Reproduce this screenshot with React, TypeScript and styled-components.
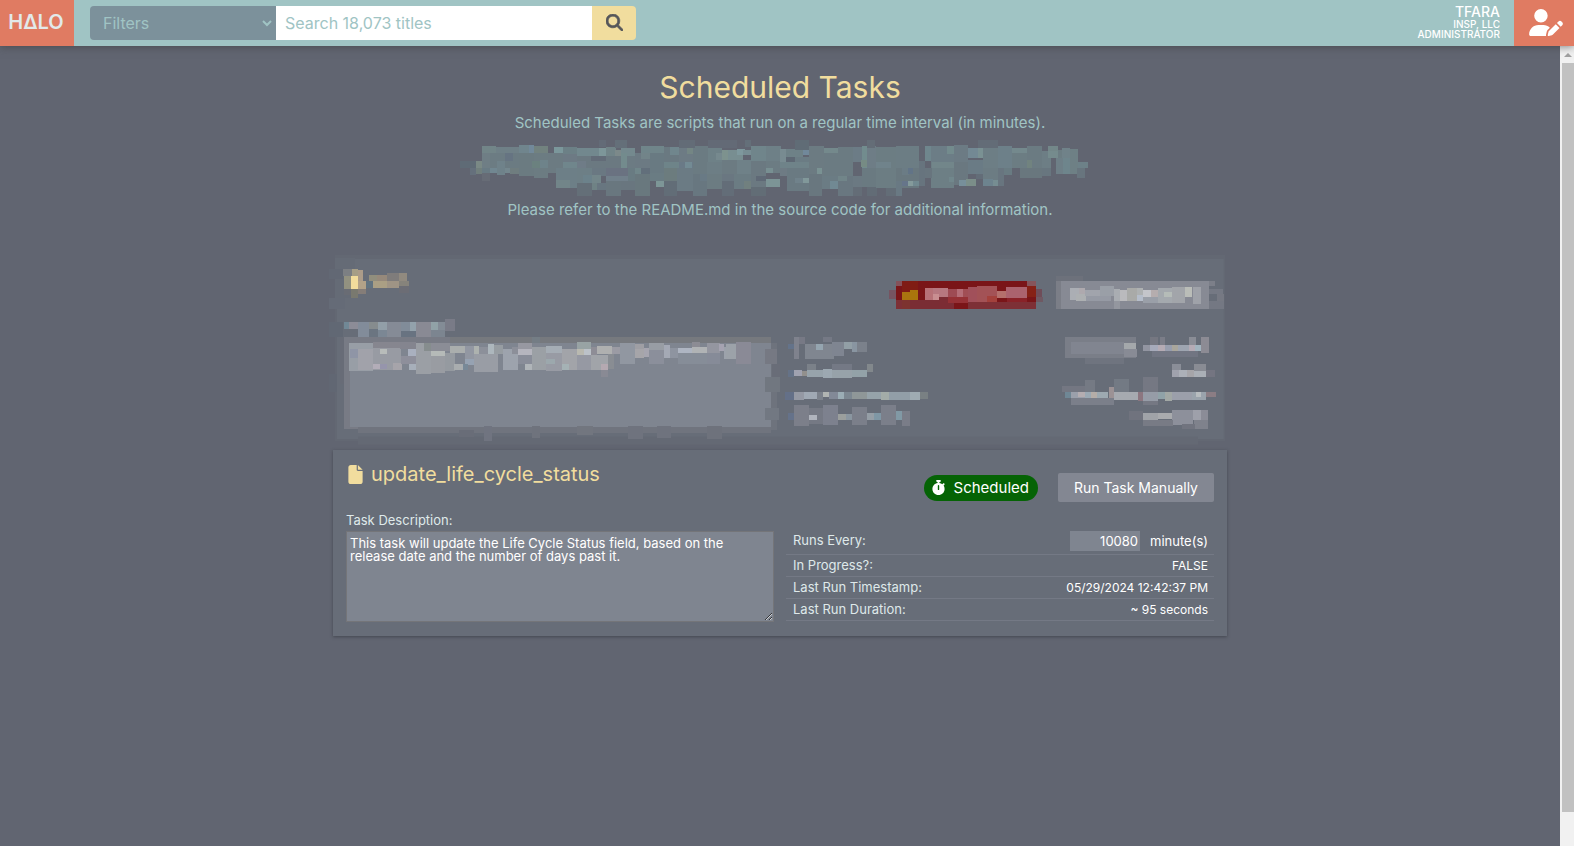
import React from "react";
import styled, { createGlobalStyle } from "styled-components";
import { FaFile, FaStopwatch, FaUserPen, FaMagnifyingGlass } from "react-icons/fa6";

const GlobalStyle = createGlobalStyle`
  * { box-sizing: border-box; }
  body { margin: 0; background: #616571; font-family: Inter, "Open Sans", sans-serif; color: #fff; }
  button, input, select, textarea { font-family: inherit; }
`;

const Page = styled.div`
  min-height: 100vh;
  display: flex;
  flex-direction: column;
`;

const Header = styled.header`
  height: 46px;
  display: flex;
  align-items: stretch;
  background: #a0c4c4;
  box-shadow: 0 1px 8px rgba(60, 60, 60, 0.6);
  z-index: 1;
`;

const Logo = styled.a`
  width: 74px;
  display: flex;
  align-items: center;
  justify-content: center;
  background: #e07b62;
  color: #e2e9ea;
  font-size: 20px;
  font-weight: 600;
  line-height: 44px;
  padding: 0 2px 2px 0;
  text-decoration: none;
`;

const SearchForm = styled.form`
  width: 546px;
  margin: 6px 0 6px 16px;
  display: flex;
`;

const FilterBox = styled.div`
  width: 186px;
  display: grid;
  align-items: center;
  background: #7c919b;
  border-radius: 4px 0 0 4px;
  > * { grid-area: 1 / 1; }
  svg { justify-self: end; margin-right: 4px; pointer-events: none; }
`;

const FilterSelect = styled.select`
  appearance: none;
  width: 100%;
  height: 34px;
  padding: 0 13px;
  border: 0;
  background: transparent;
  color: #a0c4c4;
  font-size: 16px;
`;

const SearchInput = styled.input`
  flex: 1;
  min-width: 0;
  padding: 0 9px;
  border: 0;
  background: #fff;
  font-size: 16px;
  &::placeholder { color: #a0c4c4; opacity: 1; }
`;

const SearchButton = styled.button`
  width: 44px;
  display: flex;
  align-items: center;
  justify-content: center;
  padding-bottom: 2px;
  border: 0;
  border-radius: 0 4px 4px 0;
  background: #f1dd9e;
  color: #55565a;
  font-size: 17px;
  svg { stroke: currentColor; stroke-width: 20px; }
`;

const Account = styled.div`
  margin-left: auto;
  padding: 5px 14px 0 0;
  display: flex;
  flex-direction: column;
  align-items: flex-end;
  font-weight: 500;
`;

const AccountName = styled.span`
  font-size: 14px;
  line-height: 14px;
`;

const AccountLine = styled.span`
  font-size: 10px;
  line-height: 10px;
`;

const AccountButton = styled.button`
  width: 60px;
  display: flex;
  align-items: center;
  justify-content: center;
  padding: 0 0 2px 4px;
  border: 0;
  background: #e07b62;
  color: #fff;
  svg { width: 34px; height: 27px; }
`;

const Body = styled.div`
  flex: 1;
  display: flex;
`;

const Main = styled.main`
  flex: 1;
  min-width: 0;
  display: flex;
  flex-direction: column;
  align-items: center;
  padding: 21px 16px 40px;
`;

const Title = styled.h1`
  margin: 0 0 6px;
  font-size: 30px;
  line-height: 40px;
  font-weight: 400;
  color: #f1dd9e;
`;

const Intro = styled.p`
  margin: 0;
  font-size: 15px;
  line-height: 20px;
  color: #a0c4c4;
  text-align: center;
`;

const IntroMosaic = styled.svg`
  width: 640px;
  max-width: 100%;
  height: 60px;
  margin: 5px 0 2px;
`;

const Tasks = styled.section`
  width: 100%;
  max-width: 894px;
  margin-top: 32px;
`;

const CardMosaic = styled.svg`
  display: block;
  width: 100%;
  overflow: visible;
`;

const Card = styled.article`
  padding: 13px 13px 14px;
  background: #676d78;
  box-shadow: 0 1px 3px rgba(40, 42, 50, 0.5);
`;

const CardHead = styled.div`
  height: 39px;
  display: flex;
  align-items: flex-start;
  justify-content: space-between;
`;

const TaskName = styled.h2`
  margin: 0;
  display: flex;
  align-items: center;
  gap: 6px;
  font-size: 20px;
  line-height: 22px;
  font-weight: 400;
  color: #f1dd9e;
`;

const Actions = styled.div`
  align-self: flex-end;
  display: flex;
  align-items: center;
  gap: 20px;
`;

const Badge = styled.span`
  height: 26px;
  padding: 0 9px 0 7px;
  display: flex;
  align-items: center;
  gap: 8px;
  border-radius: 13px;
  background: #056305;
  font-size: 15px;
`;

const RunButton = styled.button`
  height: 29px;
  padding: 0 16px;
  border: 0;
  border-radius: 2px;
  background: #838792;
  color: #fff;
  font-size: 14px;
`;

const CardBody = styled.div`
  margin-top: 9px;
  display: grid;
  grid-template-columns: 1fr 1fr;
  gap: 12px;
`;

const Description = styled.label`
  font-size: 13px;
  line-height: 18px;
  color: #dfe9ea;
`;

const DescriptionText = styled.textarea`
  display: block;
  width: 100%;
  height: 91px;
  margin-top: 2px;
  padding: 5px 3px;
  border: 1px solid #747579;
  background: #7f8590;
  color: #fff;
  font-size: 13px;
  line-height: 13px;
  resize: both;
`;

const Facts = styled.table`
  width: 100%;
  margin-top: 20px;
  align-self: start;
  border-collapse: separate;
  border-spacing: 0;
  font-size: 13px;
  line-height: 21px;
  th, td { padding: 0 6px; border-bottom: 1px solid #747985; font-weight: 400; }
  th { padding-left: 7px; text-align: left; color: #dfe9ea; }
  td { text-align: right; font-size: 12px; }
  tr:first-child th { vertical-align: top; line-height: 18px; }
`;

const Interval = styled.span`
  height: 23px;
  display: flex;
  align-items: flex-start;
  justify-content: flex-end;
  gap: 10px;
  font-size: 13px;
  line-height: 20px;
`;

const IntervalInput = styled.input`
  width: 70px;
  height: 20px;
  padding: 0 2px;
  border: 0;
  background: #7f8590;
  color: #fff;
  font-size: 13px;
  text-align: right;
`;

const ScrollTrack = styled.div`
  width: 14px;
  display: flex;
  flex-direction: column;
  align-items: stretch;
  padding: 0 0 34px 2px;
  background: #f1f1f1;
`;

const ScrollArrow = styled.svg`
  width: 12px;
  height: 17px;
`;

const ScrollThumb = styled.div`
  flex: 1;
  background: #c1c1c1;
`;

// Each cell reads "x y width height colour".
const introCells = `
0 70 48 20 5f6b76;30 90 18 20 65707c;48 68 24 22 7a8985;48 90 18 17 717f7d;66 24 42 20 728588;66 44 24 46 6f7e85;66 90 24 16 697b84;66 106 24 22 676c76
90 44 45 46 6c7c83;90 90 20 15 718791;108 27 70 18 6f8087;110 70 25 40 6f828a;135 45 42 45 6b7b82;135 45 24 24 667482;135 90 15 15 74878e;150 90 27 17 6f7d7f
177 21 45 24 70858d;207 21 15 24 72899a;222 24 42 21 72827f;177 45 45 69 6b7b81;222 45 42 75 6c7c82;216 68 24 22 6b817f;240 65 24 25 6e838a
264 44 45 60 6c7b82;282 27 27 18 7b979b;309 27 42 20 6c8086;309 47 42 43 6d7a84;309 72 42 18 70868c;288 90 63 60 6d7f87;288 125 42 25 728589
351 30 66 24 72888e;417 29 22 25 7d9699;438 28 30 25 718488;465 36 18 18 7c898a;483 29 42 24 74898e;351 53 132 37 6b7981;393 53 45 17 636c78;351 70 27 35 6f7c87
483 45 18 45 738b8d;501 53 24 37 6c7b83;351 90 45 45 6d7f86;370 110 26 25 6c828b;351 135 45 39 646f78;396 90 42 25 6a7882;396 111 27 25 73868a;396 135 15 20 6f8285;411 136 27 20 687680
438 90 66 24 6a7281;438 114 66 15 71808b;438 129 45 45 69777f;483 129 42 27 69767f;504 90 21 39 697b82;525 90 17 18 70868a;542 90 28 18 626f7b;525 108 45 66 69787e
525 45 45 45 6c7a83;543 24 70 21 70858a;543 45 30 18 728489;570 45 42 60 697a82;570 105 42 24 6a7c83;588 129 24 18 7d9697;612 27 45 45 6a7981;630 27 27 24 70868d
612 72 45 18 6e8489;612 90 42 40 6c7c7e;612 129 39 45 626d77;657 30 42 42 6d7b84;681 30 18 18 748684;657 72 42 18 6a7a87;675 72 22 18 738b94;651 90 48 69 6b7b84
699 24 45 85 6b7b82;744 27 42 45 6e8187;699 108 42 66 687780;720 108 21 20 697a85;768 45 18 21 76898e;741 72 45 36 6d7e85;741 108 45 45 6c7c82
786 36 18 30 7d928e;804 36 45 30 788e91;831 33 24 18 7e989d;849 36 24 15 778d93;786 66 45 42 6c7b82;831 66 42 42 6f8188;786 108 36 45 6a7781;786 130 36 44 636d78;822 108 51 45 6b7c83;852 129 21 24 71807f
873 24 45 45 70858b;918 24 45 45 6e8087;873 69 45 78 6b7981;918 69 42 36 6c7c83;888 114 30 15 5f6976;918 90 21 15 788f92;918 122 42 25 7c9496;873 147 45 27 626d76
417 6 20 22 636b77;465 6 36 24 646f79;657 7 48 22 636c77;744 6 86 24 636a76;855 6 18 22 646f79
960 33 18 39 788b91;978 33 51 24 6e8187;1029 36 18 15 71889a;978 57 27 15 5e6874;1005 57 42 33 6b7c84;960 72 87 18 6f8389;960 90 21 24 6e7b84;981 90 66 69 6a7a82;1005 120 24 15 70828b;1029 120 18 15 81989a
1005 6 42 30 606c76;1047 24 45 90 6c7b82;1092 30 42 15 74898c;1092 45 42 69 6b7b82;1071 90 15 18 7a9293;1047 108 40 66 69777f;1087 114 47 39 6b7c84;1111 129 23 24 718993
1134 27 45 87 6b7b82;1179 27 27 45 6c7c86;1206 24 42 66 6e7d86;1206 24 15 66 728c8e;1203 66 18 22 768b84;1134 114 45 60 697780;1134 114 28 15 718589;1179 114 27 33 6b7982;1179 147 27 27 646d77
1221 7 24 22 646d77;1206 90 45 57 6a7a81;1221 147 30 27 626c76;1248 27 60 123 6c7d83;1248 72 45 18 70838b;1308 24 70 66 6c7d84;1308 90 70 60 69787f;1278 150 48 24 636d77;1308 129 18 45 697983
1326 90 20 21 6b7c85;1326 129 18 15 66758a;1344 129 15 15 849a9b;1359 129 36 15 718990;1344 90 15 18 627487;1378 69 17 75 67747e;1395 24 18 45 6f868d;1413 24 69 48 6c7d86;1413 72 69 78 6d7f85;1395 90 21 30 68757e
1416 72 66 18 72868a;1461 24 21 24 738b8d;1467 117 15 15 71878c;1482 21 42 51 6c7b84;1482 72 42 68 6a7880;1524 30 30 30 738994;1554 30 15 30 7a9193;1498 126 20 18 778f9a;1518 123 30 20 7b8e89;1548 108 21 15 636d78
1524 66 45 43 6a7b85;1569 30 45 60 6d7e85;1569 90 45 54 6c7c83;1599 126 15 18 768d92;1569 123 30 21 6d838e;1614 24 42 66 6d8089;1614 90 18 54 68757f;1656 30 45 60 6c7d83;1656 30 45 15 74898d;1632 90 24 20 697b82
1555 7 60 23 636c77;1701 24 45 96 6b7b82;1680 90 66 30 69777e;1701 66 15 24 71837f;1746 39 27 51 6d7e85;1764 24 30 15 738789;1764 39 30 21 758b8d;1794 36 36 54 6c7d83;1746 90 27 24 68767f;1806 30 24 30 708289;1788 60 42 48 6e7f87
1830 33 24 75 6e8085;1809 60 21 48 6e858c;1854 72 30 18 6d8188;1851 90 24 30 68757e
`;

const cardCells = `
30 24 60 120 656b76;12 57 42 30 626874;12 144 48 33 656b77;12 216 42 45 616874;45 262 30 140 686c77;12 372 24 54 616773
54 57 27 22 7c7f83;81 57 18 22 a69e86;99 60 15 34 ac9c89;57 79 21 38 929180;78 79 21 38 f2dc9c;99 94 24 23 b3a288;78 117 21 26 79796f;99 117 24 15 857d78;57 117 21 18 696c74
132 75 24 18 918e7d;156 75 30 18 96897b;186 69 36 24 7f7c7b;222 69 24 24 918a7f;144 93 42 21 aa9f84;186 93 36 21 9f9485;222 93 30 15 86837b;222 108 30 20 6c6d75;123 93 21 20 627380
57 216 15 20 718896;72 216 27 20 8c8c97;99 216 33 45 828c9a;132 216 27 22 868c8e;132 238 27 22 6b7581;159 216 27 24 929fa8;159 240 27 20 7b8794;186 216 42 45 858b96;228 216 27 27 818c99;255 216 18 27 93a2ac;228 243 45 17 687381;273 216 45 45 898a94;318 216 21 24 91a2a7;339 216 21 24 838c96;318 240 42 20 7c8590;360 207 30 36 797b87
57 261 1281 276 787b85;375 261 963 18 76797e;620 261 26 18 747d85;75 279 1263 252 7f8590
72 279 72 84 989ea6;99 297 45 63 a1a2aa;75 297 24 27 8f95a6;144 276 81 18 86868f;144 294 84 66 989ba3;165 297 21 15 b8bcba;144 343 21 15 b3adb8;165 343 20 15 9695ac;204 340 27 20 a6a4aa
225 276 48 20 84858f;249 297 24 21 a9b0bf;228 318 45 25 8e8f9b;252 343 22 16 a7afba;273 279 45 93 9b9fa5;318 303 42 15 b5bab8;318 318 42 51 999ca2;298 279 20 24 868d8e;318 279 57 24 8b8d96;375 288 45 21 aaaead;360 309 30 54 959aa0;387 343 27 17 a9adaf
420 288 27 54 9297a2;447 288 15 24 adb2af;462 290 27 22 8c909a;489 282 18 30 adb7bd;507 284 27 28 979da2;447 312 72 53 999da5;421 327 26 18 96a2b2;414 342 15 18 788998;534 297 45 63 9da3ad;561 290 18 22 8c8f99;579 279 42 18 9798a1;579 297 42 18 b5b5be;600 343 21 17 b0b5b9
579 315 42 28 898d99;621 291 42 70 9ba0a5;663 288 48 21 a5adb5;663 309 48 54 989ba4;663 327 27 15 9ca8ad;711 297 45 63 a2a4a9;756 276 42 21 98a3a4;756 297 22 18 b9b9b0;778 297 21 18 bcc2c9;711 343 21 18 a5b2b5;756 315 42 45 9699a3;798 291 18 24 8e8d96
798 315 51 45 a1a4a9;816 288 45 24 afb0b0;828 342 21 18 b5a9b1;828 360 21 21 898a94;849 312 18 45 898d93;861 290 24 22 9b9ba4;885 279 45 63 9197a1;930 282 27 15 9f9fa4;930 297 27 27 a6a5a9;957 294 15 28 a6a5af;972 279 45 63 8b8f9b;972 279 45 21 989da4;1017 284 18 40 a4a9b5;1035 294 24 30 8e94a0
1059 294 42 16 aeb5c2;1101 291 45 19 b0b3b5;1101 276 24 15 8c8c94;1059 310 87 32 868d98;1146 279 39 30 9496a0;1146 309 39 33 868b98;1181 282 16 21 a5a3b1;1197 290 36 37 9ca2ab;1203 282 30 45 9ca2a9;1233 276 45 66 8a8a96
1338 279 18 260 6e737d;1320 297 36 45 767983;1341 342 24 40 696d78;1320 382 45 44 717780;1320 474 42 36 727882;99 531 1239 17 70747e;402 540 45 20 696d78;477 528 24 45 707480;620 528 26 36 6f737d;756 528 48 27 72767f;909 528 45 38 6f737e;996 528 42 36 6f737e;1146 528 45 40 6e727c
1692 120 21 26 765461;1713 93 420 84 7a1518;1713 93 18 15 85525a;2106 93 27 15 86555b;1731 93 24 32 7f1c15;1755 93 25 28 801c14;1731 126 24 24 aa7410;1755 120 24 30 aa750c;1731 150 24 27 7d3330;1755 150 90 27 7a2d34;1713 150 18 27 7d3036
1800 114 24 36 b77177;1824 114 45 27 b77880;1824 132 18 18 c98e91;1842 141 45 36 7c2c34;1869 117 27 24 9e4b54;1896 117 18 24 b56d77;1914 117 15 24 a14e55;1870 141 59 17 963136;1929 111 27 45 a1505a;1956 108 60 48 a35256;2016 123 27 20 b4706c;2043 111 63 33 ab636e;2106 108 27 34 862116;1985 138 30 18 a4413c;2045 143 61 15 8a2228;1929 156 204 21 7d3036;2133 117 18 24 6f4d59;2133 142 20 15 6f5963
2193 93 15 84 7b7e87;2208 93 444 84 878a94;2235 114 27 36 abaeb4;2262 114 18 18 aea9ae;2253 132 30 21 adb0b2;2280 120 45 18 a1a4ac;2325 108 42 30 9a9fa7;2283 138 75 15 969aa4;2367 117 18 36 a9adb2;2385 120 21 33 bababd;2406 114 30 39 a9aaa8;2436 114 18 20 aeb1b2;2436 134 18 18 b5bdca;2454 120 24 20 c4c5ca;2478 120 21 20 b5adae;2454 140 45 20 9a9fa8;2499 114 42 45 a4a9ae;2517 126 24 15 b5bcb8;2541 111 39 48 a2a5aa;2580 111 21 30 babdb8;2604 111 24 51 9fa2a9;2367 153 18 24 94979f;2652 93 18 15 7c7f89;2652 117 42 15 757984;2676 132 21 24 767983;2652 153 45 24 747883;2194 78 80 15 6d717b
1389 282 18 15 64738a;1407 261 15 65 7f828d;1422 261 18 22 777985;1440 282 87 45 808690;1473 282 21 18 95a5b0;1495 261 26 15 757985;1557 276 24 21 929fa6;1581 276 15 30 8995a1;1596 276 30 30 7b818b;1521 276 36 42 7f8591
2220 261 213 63 7a7e88;2238 276 159 36 818590;2397 279 36 18 a4a8ab;2397 297 38 24 888b95;2280 324 117 18 6f747f;2454 285 21 18 9295a1;2475 285 24 18 a6aaba;2499 285 21 18 b5abb4;2520 285 21 18 989eae;2541 285 18 18 a9a69c;2559 285 33 18 9ea5b1;2592 285 18 18 b5abb5;2610 285 18 18 a2b4bf;2628 261 24 47 8c8b94;2475 261 24 24 757781;2505 261 15 24 7b7d88;2592 261 20 24 8a8d96;2480 303 140 17 717582
1389 360 18 22 657287;1407 360 24 18 a0a2b0;1431 363 15 15 92908d;1446 360 48 22 97a3ab;1494 358 27 25 9ca8b1;1521 360 60 24 97a2a9;1581 360 45 21 93a2a8;1446 343 27 17 7b8189;1521 343 60 17 747985;1626 343 18 23 82888c;2541 343 27 38 8a8e98;2541 360 20 21 a0a2ad;2562 360 24 21 acb0b8;2586 360 21 21 a6a5a9;2607 343 36 20 898c94;2607 363 36 18 aaafb6;2643 360 28 20 747581
1380 426 27 24 647088;1407 426 30 24 9599a4;1437 426 39 20 a0a9b4;1494 426 18 15 b0b4b2;1476 426 18 24 7b818b;1512 426 27 21 828997;1539 426 18 20 9badb5;1557 426 24 20 7c8791;1581 426 45 20 8f9798;1626 426 42 20 96a3aa;1668 426 24 24 a3aca8;1692 426 63 24 929ea7;1755 426 30 24 9fabb2;1785 426 24 21 798083
2211 408 69 18 747782;2280 390 30 36 757a84;2220 426 18 18 6f8795;2238 426 42 18 9ba0ab;2258 426 22 15 b4adb1;2280 426 18 21 9ba9b4;2298 426 18 21 b5ada8;2316 426 33 24 9da9b1;2352 411 15 39 9c9295;2367 387 45 63 737a84;2367 426 87 24 a6aab0;2440 426 14 26 8c7680;2454 382 45 84 757883;2454 426 45 26 969ca7;2499 426 42 20 90a2a8;2520 426 21 27 a2a8a5;2541 426 60 24 9b9faa;2601 426 42 24 9aa3ac;2612 426 16 16 b8bdc0;2643 426 29 15 8b7d84;2238 444 129 20 7b7f8a
1389 490 18 20 65728a;1407 465 45 63 7c7f8a;1452 474 42 48 757984;1452 495 24 15 b0b4bd;1494 465 45 60 7d818e;1539 492 24 18 9b9f9d;1563 492 18 18 8a96a0;1581 471 45 54 7b7f8a;1626 490 21 20 959ea6;1647 490 21 20 7f97a5;1668 465 45 60 7b7f8a;1713 484 18 25 8199a5;1731 484 24 43 7a7d88
2412 484 42 25 70737e;2454 489 45 22 a0a3a8;2499 489 42 18 a9abae;2541 480 63 45 8d909b;2604 480 24 30 9ea0aa;2454 510 90 18 787b85;2607 510 42 28 7f828c;2628 480 20 30 8b8c97;2570 522 40 14 71747f
`;

interface MosaicProps {
  cells: string;
}

function MosaicCells({ cells }: MosaicProps) {
  return (
    <g shapeRendering="crispEdges">
      {cells.trim().split(/[;\n]/).map((cell, i) => {
        const [x, y, w, h, c] = cell.trim().split(" ");
        return <rect key={i} x={x} y={y} width={w} height={h} fill={"#" + c} />;
      })}
    </g>
  );
}

export default function App() {
  return (
    <>
      <GlobalStyle />
      <Page>
        <Header>
          <Logo href="#" aria-label="HALO">HΔLO</Logo>
          <SearchForm role="search" onSubmit={(e) => e.preventDefault()}>
            <FilterBox>
              <FilterSelect aria-label="Filters" defaultValue="">
                <option value="">Filters</option>
              </FilterSelect>
              <svg width="10" height="8" viewBox="0 0 10 8" fill="none" stroke="#a0c4c4" strokeWidth="2">
                <path d="M1 2l4 4 4-4" />
              </svg>
            </FilterBox>
            <SearchInput type="search" aria-label="Search titles" placeholder="Search 18,073 titles" />
            <SearchButton type="submit" aria-label="Search"><FaMagnifyingGlass /></SearchButton>
          </SearchForm>
          <Account>
            <AccountName>TFARA</AccountName>
            <AccountLine>INSP, LLC</AccountLine>
            <AccountLine>ADMINISTRATOR</AccountLine>
          </Account>
          <AccountButton type="button" aria-label="Edit account"><FaUserPen /></AccountButton>
        </Header>
        <Body>
          <Main>
            <Title>Scheduled Tasks</Title>
            <Intro>Scheduled Tasks are scripts that run on a regular time interval (in minutes).</Intro>
            <IntroMosaic viewBox="0 0 1920 180" aria-hidden="true">
              <MosaicCells cells={introCells} />
            </IntroMosaic>
            <Intro>Please refer to the README.md in the source code for additional information.</Intro>
            <Tasks>
              <CardMosaic viewBox="24 6 2682 594" aria-hidden="true">
                <rect x="30" y="14" width="2670" height="560" fill="#636873" />
                <rect x="36" y="27" width="2660" height="540" fill="#676d78" />
                <rect x="99" y="560" width="2520" height="24" fill="#646974" />
                <MosaicCells cells={cardCells} />
              </CardMosaic>
              <Card>
                <CardHead>
                  <TaskName><FaFile size={19} />update_life_cycle_status</TaskName>
                  <Actions>
                    <Badge><FaStopwatch size={15} />Scheduled</Badge>
                    <RunButton type="button">Run Task Manually</RunButton>
                  </Actions>
                </CardHead>
                <CardBody>
                  <Description>
                    Task Description:
                    <DescriptionText
                      defaultValue="This task will update the Life Cycle Status field, based on the release date and the number of days past it."
                    />
                  </Description>
                  <Facts>
                    <tbody>
                      <tr>
                        <th scope="row"><label htmlFor="interval">Runs Every:</label></th>
                        <td>
                          <Interval>
                            <IntervalInput id="interval" inputMode="numeric" defaultValue="10080" />
                            minute(s)
                          </Interval>
                        </td>
                      </tr>
                      <tr><th scope="row">In Progress?:</th><td>FALSE</td></tr>
                      <tr><th scope="row">Last Run Timestamp:</th><td>05/29/2024 12:42:37 PM</td></tr>
                      <tr><th scope="row">Last Run Duration:</th><td>~ 95 seconds</td></tr>
                    </tbody>
                  </Facts>
                </CardBody>
              </Card>
            </Tasks>
          </Main>
          <ScrollTrack aria-hidden="true">
            <ScrollArrow viewBox="0 0 12 17"><path d="M2 11l4-4 4 4z" fill="#a0a0a0" /></ScrollArrow>
            <ScrollThumb />
          </ScrollTrack>
        </Body>
      </Page>
    </>
  );
}
